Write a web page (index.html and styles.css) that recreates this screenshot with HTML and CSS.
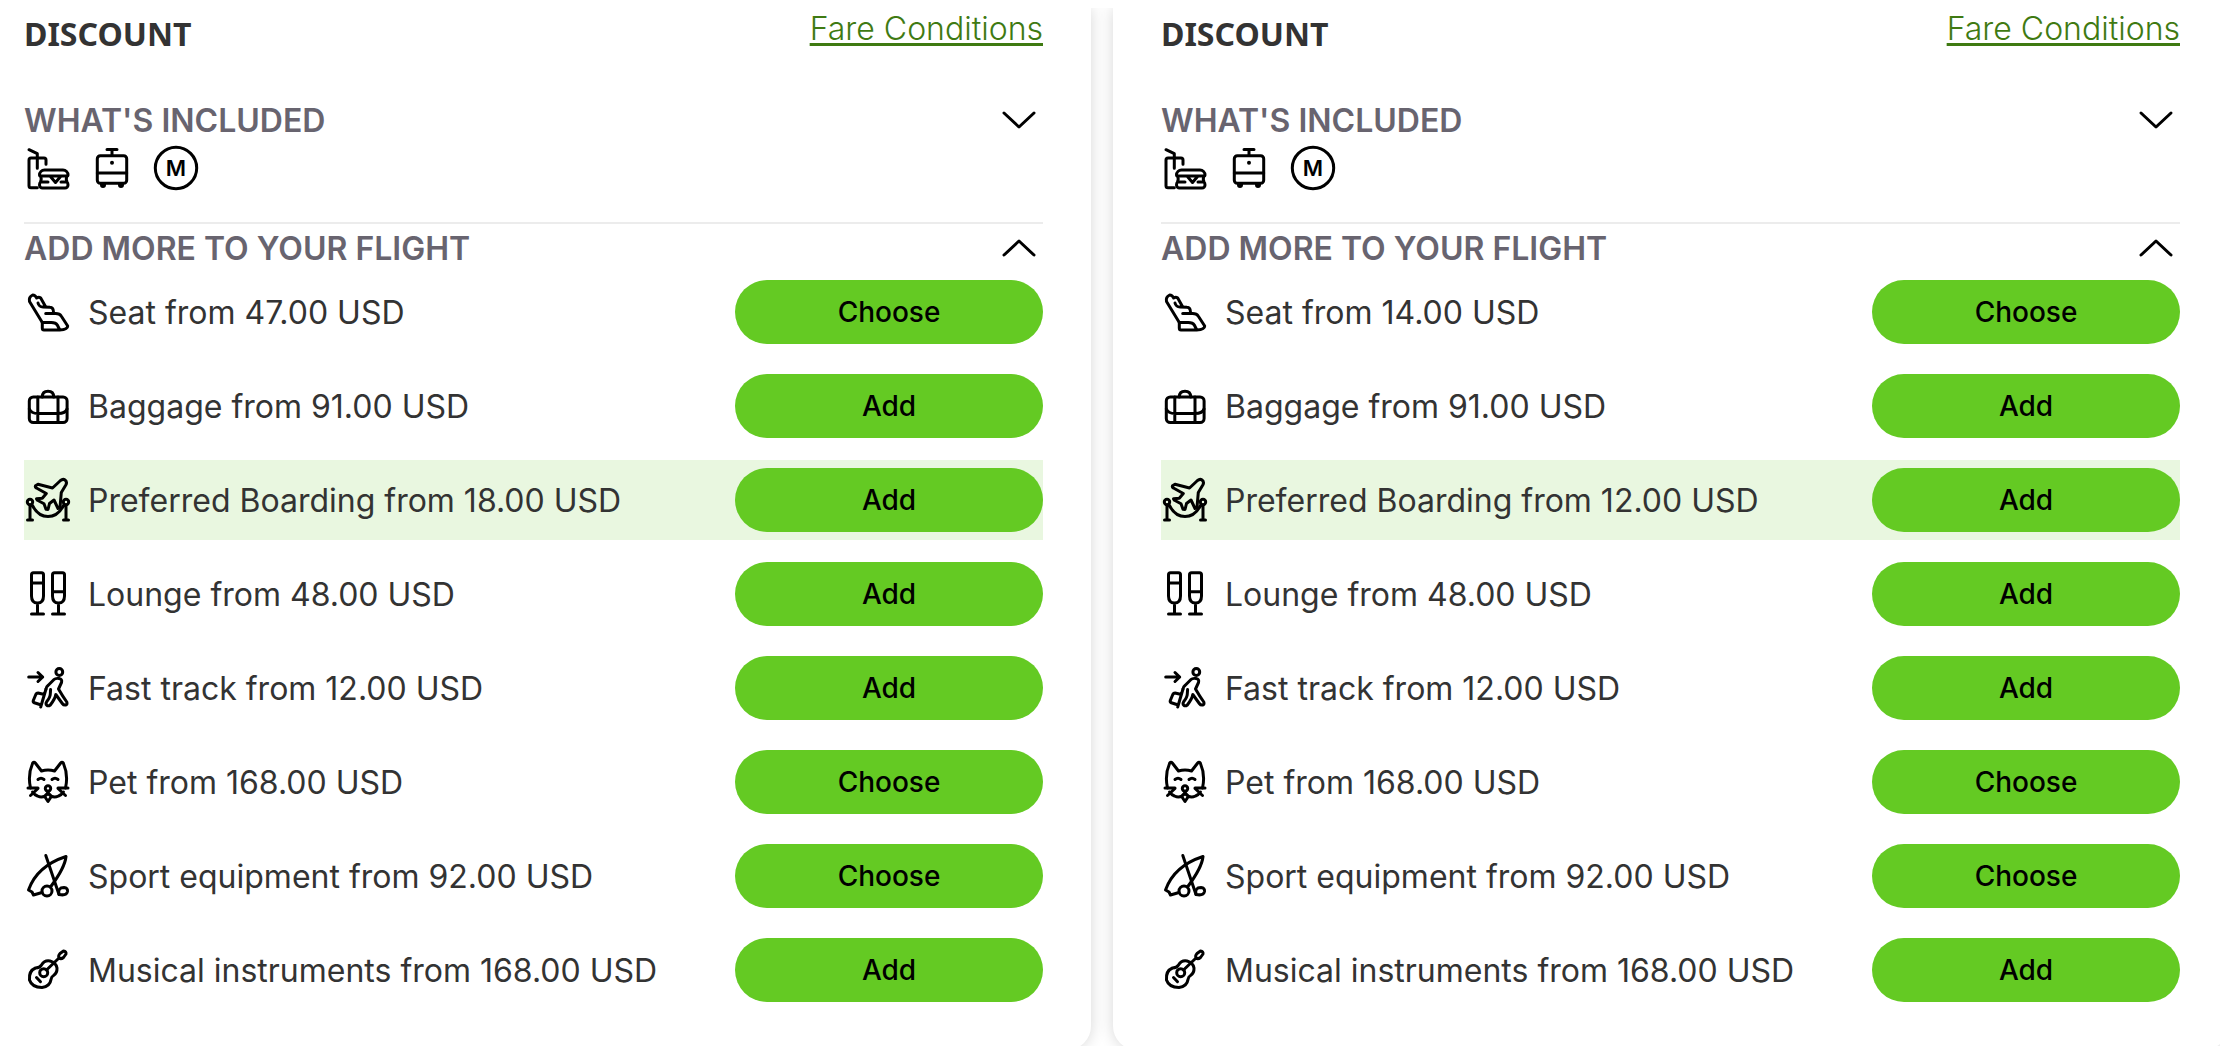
FILE: index.html
```html
<!DOCTYPE html>
<html lang="en">
<head>
    <meta charset="UTF-8">
    <meta name="viewport" content="width=device-width, initial-scale=1.0">
    <title>Fare extras</title>
    <link rel="stylesheet" href="styles.css">
</head>
<body>
    <!-- Icon sprite -->
    <svg class="sprite" aria-hidden="true">
        <symbol id="icon-meal" viewBox="0 0 48 48">
            <path d="M5 5.7l8.3 4v14.6M13.3 43.7H7a2 2 0 0 1-2-2V16a2 2 0 0 1 2-2h13a2 2 0 0 1 2 2v4.3"/>
            <path d="M20.5 26h18.5a5 5 0 0 1 5 5q0 1-1.5 1H17q-1.5 0-1.5-1a5 5 0 0 1 5-5zM16.5 32q1.5 3 0 6M43 32q-1.5 3 0 6M18 38h6M37 38h5M26 32l5.5 6.5 5.5-6.5M16.5 38q-1 1-1 3a3 3 0 0 0 3 3h22.5a3 3 0 0 0 3-3q0-2-1-3"/>
        </symbol>
        <symbol id="icon-train" viewBox="0 0 48 48">
            <rect x="9.3" y="11.7" width="29.4" height="27.6" rx="3"/>
            <path d="M19 5.5h10M24 5.5v6M9.3 29h29.4"/>
            <circle class="solid" cx="24" cy="18.7" r="2"/>
            <path class="solid" d="M12 39.500h6v1.500a3 3 0 0 1-6 0zM30 39.500h6v1.500a3 3 0 0 1-6 0z"/>
        </symbol>
        <symbol id="icon-metro" viewBox="0 0 48 48">
            <circle cx="24" cy="24" r="20.7"/>
            <text class="metro-letter" x="24" y="32" text-anchor="middle">M</text>
        </symbol>
        <symbol id="icon-seat" viewBox="0 0 48 48">
            <path d="M18.3 34.5L5.5 13.5Q4.5 9 8.7 7q2.5 0 4 3 2-1.5 4 0l4.5 8M14 15q1 4 5 4l7 .3q3.500 0 3.500 5"/>
            <path d="M21.7 25.5h10q4 0 5.5 2.5l6.5 10q0 3.5-8 4H20q-1.700 0-1.700-2v-5.500h9q4.500 0 6 2.500l2.500 5"/>
        </symbol>
        <symbol id="icon-baggage" viewBox="0 0 48 48">
            <rect x="5.3" y="15" width="37.8" height="25.5" rx="4"/>
            <path d="M18.3 15q0-5.7 5.7-5.7t5.7 5.7M13.8 15v25.5M34 15v25.5M5.3 27q2 4.5 8.5 4.5H34q7.5 0 9-4.5"/>
        </symbol>
        <symbol id="icon-boarding" viewBox="0 0 48 48">
            <circle cx="6" cy="26" r="2.7"/>
            <circle cx="42" cy="26" r="2.7"/>
            <path d="M6 29v15M3.500 44h5M42 29v15M39.500 44h5M8.500 29.500Q14 40.500 24 40.500t15.500-11"/>
            <path d="M41 4q-2-1.500-4.500.5L28.500 12 14 8.300l-2.500 1.500q-.5 1.500.5 2l10.300 5.700-4 4.800-5.800.5 1 1.500 6.500 3.500 2 5.500 2 .2 1.500-6 4.500-3.500 4 8.500 2-1 1.300-15 4.500-7.500Q43.500 6 41 4z"/>
        </symbol>
        <symbol id="icon-lounge" viewBox="0 0 48 48">
            <path d="M9.500 2.800h8a2 2 0 0 1 2 2V26q0 7-6 7t-6-7V4.800a2 2 0 0 1 2-2zM13.500 33v11M7.500 44h12M7.500 13h12"/>
            <path d="M30.500 2.800h8a2 2 0 0 1 2 2V26q0 7-6 7t-6-7V4.800a2 2 0 0 1 2-2zM34.500 33v11M28.500 44h12M28.500 21.800h12"/>
        </symbol>
        <symbol id="icon-fast-track" viewBox="0 0 48 48">
            <path d="M4.700 13h14M14 8.500l4.700 4.500-4.700 4.500"/>
            <circle cx="35.3" cy="8" r="3.4"/>
            <path d="M22 25q0-2 2-3.500l6-6q1.500-1.500 5-1 3.500.5 2.500 4l-3 6.500q4 7 8.300 13 .7 2.500-1 3-2 .5-3.500-1.500l-6.500-9q-.5 4-5.500 10.500-2 1.500-3.500.3-1.500-1.500 0-3.800 3.500-4.500 3.500-7.500l.3-4.500"/>
            <path d="M22 25l-5.300 18M20.500 30.500l-6.500-1.500q-1.500 0-2.200 1.500l-2.500 6q-.5 1.700 1 2.300l7 2.200"/>
        </symbol>
        <symbol id="icon-pet" viewBox="0 0 48 48">
            <path d="M6.500 30Q3.500 17 8.700 5q1.300-1.500 2.600 0L17.500 13q6.500-2 13 0l6.200-8q1.300-1.500 2.600 0Q44.500 17 41.500 30"/>
            <path d="M14 21.500q3-2.500 6 0M28 21.500q3-2.500 6 0M4 30h10M34 30h10M6.500 37.500l7.500-7M41.500 37.500l-7.500-7M8.500 34q2 3 5 4 6 3 10.500-3 4.500 6 10.500 3 3-1 5-4M21 39l3 4.500 3-4.500"/>
            <circle cx="24" cy="30.5" r="2.7"/>
            <path d="M24 33v3"/>
        </symbol>
        <symbol id="icon-sport" viewBox="0 0 48 48">
            <path d="M18 40.500L9.500 43l-1.500-3-3.500-2Q13 14 42 4.500q-1 11-15.500 30.500"/>
            <path d="M21.800 3.500L35 42.500"/>
            <circle cx="23" cy="39" r="5"/>
            <path d="M35 42.500q-1.500-7 5-7 4 .5 3.500 4-1 4.500-8.500 3z"/>
        </symbol>
        <symbol id="icon-music" viewBox="0 0 48 48">
            <path d="M17.500 19q3-5 8.500-4 6 1.500 7 7 .3 5-3.500 7.500-2 1-2.500 4-1 7-9 8-10 0-12.500-7.500-1-9 6-12 4.500-.3 6-3z"/>
            <circle cx="19.7" cy="26.7" r="4"/>
            <path d="M22.500 24L35 12M12.500 31.500l4 4.200M35 12q-1-2.500 1-4.500l3.500-2.500q3 .5 2.500 3l-2.500 3.500q-2.500 2-4.500.5z"/>
        </symbol>
        <symbol id="icon-chevron-down" viewBox="0 0 48 48">
            <path d="M9 17l15 14 15-14"/>
        </symbol>
        <symbol id="icon-chevron-up" viewBox="0 0 48 48">
            <path d="M9 31l15-14 15 14"/>
        </symbol>
    </svg>

    <main class="fares">
        <section class="fare-card">
            <header class="fare-header">
                <h2 class="fare-name">DISCOUNT</h2>
                <a class="fare-link" href="#">Fare Conditions</a>
            </header>

            <div class="included">
                <button class="section-toggle" type="button" aria-expanded="false">
                    WHAT'S INCLUDED
                    <svg class="icon chevron"><use href="#icon-chevron-down"/></svg>
                </button>
                <div class="included-icons">
                    <svg class="icon"><use href="#icon-meal"/></svg>
                    <svg class="icon"><use href="#icon-train"/></svg>
                    <svg class="icon"><use href="#icon-metro"/></svg>
                </div>
            </div>

            <button class="section-toggle" type="button" aria-expanded="true">
                ADD MORE TO YOUR FLIGHT
                <svg class="icon chevron"><use href="#icon-chevron-up"/></svg>
            </button>
            <ul class="extras">
                <li class="extra">
                    <svg class="icon"><use href="#icon-seat"/></svg>
                    <span class="extra-label">Seat from 47.00 USD</span>
                    <button class="extra-button" type="button">Choose</button>
                </li>
                <li class="extra">
                    <svg class="icon"><use href="#icon-baggage"/></svg>
                    <span class="extra-label">Baggage from 91.00 USD</span>
                    <button class="extra-button" type="button">Add</button>
                </li>
                <li class="extra highlighted">
                    <svg class="icon"><use href="#icon-boarding"/></svg>
                    <span class="extra-label">Preferred Boarding from 18.00 USD</span>
                    <button class="extra-button" type="button">Add</button>
                </li>
                <li class="extra">
                    <svg class="icon"><use href="#icon-lounge"/></svg>
                    <span class="extra-label">Lounge from 48.00 USD</span>
                    <button class="extra-button" type="button">Add</button>
                </li>
                <li class="extra">
                    <svg class="icon"><use href="#icon-fast-track"/></svg>
                    <span class="extra-label">Fast track from 12.00 USD</span>
                    <button class="extra-button" type="button">Add</button>
                </li>
                <li class="extra">
                    <svg class="icon"><use href="#icon-pet"/></svg>
                    <span class="extra-label">Pet from 168.00 USD</span>
                    <button class="extra-button" type="button">Choose</button>
                </li>
                <li class="extra">
                    <svg class="icon"><use href="#icon-sport"/></svg>
                    <span class="extra-label">Sport equipment from 92.00 USD</span>
                    <button class="extra-button" type="button">Choose</button>
                </li>
                <li class="extra">
                    <svg class="icon"><use href="#icon-music"/></svg>
                    <span class="extra-label">Musical instruments from 168.00 USD</span>
                    <button class="extra-button" type="button">Add</button>
                </li>
            </ul>
        </section>

        <section class="fare-card">
            <header class="fare-header">
                <h2 class="fare-name">DISCOUNT</h2>
                <a class="fare-link" href="#">Fare Conditions</a>
            </header>

            <div class="included">
                <button class="section-toggle" type="button" aria-expanded="false">
                    WHAT'S INCLUDED
                    <svg class="icon chevron"><use href="#icon-chevron-down"/></svg>
                </button>
                <div class="included-icons">
                    <svg class="icon"><use href="#icon-meal"/></svg>
                    <svg class="icon"><use href="#icon-train"/></svg>
                    <svg class="icon"><use href="#icon-metro"/></svg>
                </div>
            </div>

            <button class="section-toggle" type="button" aria-expanded="true">
                ADD MORE TO YOUR FLIGHT
                <svg class="icon chevron"><use href="#icon-chevron-up"/></svg>
            </button>
            <ul class="extras">
                <li class="extra">
                    <svg class="icon"><use href="#icon-seat"/></svg>
                    <span class="extra-label">Seat from 14.00 USD</span>
                    <button class="extra-button" type="button">Choose</button>
                </li>
                <li class="extra">
                    <svg class="icon"><use href="#icon-baggage"/></svg>
                    <span class="extra-label">Baggage from 91.00 USD</span>
                    <button class="extra-button" type="button">Add</button>
                </li>
                <li class="extra highlighted">
                    <svg class="icon"><use href="#icon-boarding"/></svg>
                    <span class="extra-label">Preferred Boarding from 12.00 USD</span>
                    <button class="extra-button" type="button">Add</button>
                </li>
                <li class="extra">
                    <svg class="icon"><use href="#icon-lounge"/></svg>
                    <span class="extra-label">Lounge from 48.00 USD</span>
                    <button class="extra-button" type="button">Add</button>
                </li>
                <li class="extra">
                    <svg class="icon"><use href="#icon-fast-track"/></svg>
                    <span class="extra-label">Fast track from 12.00 USD</span>
                    <button class="extra-button" type="button">Add</button>
                </li>
                <li class="extra">
                    <svg class="icon"><use href="#icon-pet"/></svg>
                    <span class="extra-label">Pet from 168.00 USD</span>
                    <button class="extra-button" type="button">Choose</button>
                </li>
                <li class="extra">
                    <svg class="icon"><use href="#icon-sport"/></svg>
                    <span class="extra-label">Sport equipment from 92.00 USD</span>
                    <button class="extra-button" type="button">Choose</button>
                </li>
                <li class="extra">
                    <svg class="icon"><use href="#icon-music"/></svg>
                    <span class="extra-label">Musical instruments from 168.00 USD</span>
                    <button class="extra-button" type="button">Add</button>
                </li>
            </ul>
        </section>
    </main>
</body>
</html>
```
FILE: styles.css
```css
* {
    margin: 0;
    padding: 0;
    box-sizing: border-box;
}

body {
    font-family: Inter, 'Liberation Sans', sans-serif;
    font-size: 32px;
    line-height: 42px;
    color: #333;
    background: #fff;
    height: 100vh;
    padding-top: 8px;
    overflow: hidden;
}

.sprite {
    display: none;
}

.icon {
    width: 48px;
    height: 48px;
    flex-shrink: 0;
    fill: none;
    stroke: #000;
    stroke-width: 3px;
    stroke-linecap: round;
    stroke-linejoin: round;
}

.solid {
    fill: #000;
    stroke: none;
}

.metro-letter {
    font-size: 22px;
    font-weight: 600;
    fill: #000;
    stroke: none;
}

/* The row of fares runs past both sides of the window */
.fares {
    display: grid;
    grid-template-columns: 1fr 1fr;
    gap: 22px;
    margin: 0 -8px 0 -24px;
    background: #fff;
    overflow: hidden;
}

.fare-card {
    padding: 0 48px 40px;
    background: #fff;
    border-radius: 0 0 24px 24px;
    box-shadow: 0 0 16px rgba(0, 0, 0, 0.16);
}

.fare-header {
    display: flex;
    justify-content: space-between;
    align-items: flex-start;
    height: 88px;
}

.fare-name {
    padding-top: 5px;
    font-family: 'Noto Sans', 'Open Sans', sans-serif;
    font-size: 32px;
    font-weight: 700;
}

.fare-link {
    font-weight: 300;
    color: #3f7a12;
    text-decoration-thickness: 3px;
    text-underline-offset: 3px;
}

.included {
    padding-bottom: 30px;
    border-bottom: 2px solid #ececec;
}

.section-toggle {
    display: flex;
    justify-content: space-between;
    align-items: center;
    width: 100%;
    height: 48px;
    background: none;
    border: none;
    font-family: inherit;
    font-size: 32px;
    font-weight: 600;
    color: #68646f;
    cursor: pointer;
}

.included-icons {
    display: flex;
    gap: 16px;
}

.extras {
    display: flex;
    flex-direction: column;
    gap: 14px;
    list-style: none;
}

.extra {
    display: flex;
    align-items: center;
    gap: 16px;
    height: 80px;
}

.extra.highlighted {
    background: #e9f7e0;
}

.extra-label {
    flex: 1;
    padding-top: 2px;
}

.extra-button {
    width: 308px;
    height: 64px;
    background: #64ca23;
    border: none;
    border-radius: 32px;
    font-family: inherit;
    font-size: 28px;
    font-weight: 500;
    color: #000;
    cursor: pointer;
}

.extra-button:hover {
    background: #59b51f;
}
```
